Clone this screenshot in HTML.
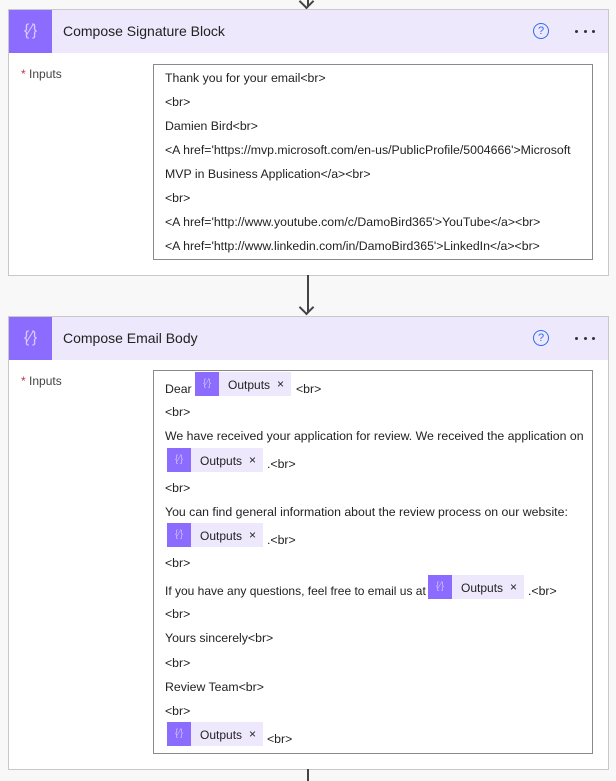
<!DOCTYPE html><html><head><style>
body{margin:0;width:616px;height:781px;background:#f8f8f8;position:relative;overflow:hidden;font-family:"Liberation Sans",sans-serif;font-size:12px;color:#222}
.a{position:absolute}
.card{position:absolute;left:8px;width:599px;background:#fff;border:1px solid #c8c8c8}
.hd{position:absolute;left:0;top:0;right:0;height:43px;background:#ede8fb}
.ic{position:absolute;left:0;top:0;width:43px;height:43px;background:#8c6cff;color:#d8ccff;font-size:16px;text-align:center;line-height:42px}
.tt{position:absolute;left:54px;top:13px;font-size:14px;color:#222}
.q{position:absolute;left:524px;top:13px;width:14px;height:14px;border:1.3px solid #2f6bf5;border-radius:50%;color:#2f6bf5;font-size:11px;text-align:center;line-height:14px}
.dots{position:absolute;left:566px;top:20px;width:20px;height:3px;display:flex;justify-content:space-between}
.dots i{width:3px;height:3px;border-radius:50%;background:#333}
.lab{position:absolute;left:12px;top:57px;color:#444}
.lab b{color:#c4314b;font-weight:normal}
.box{position:absolute;left:144px;background:#fff;border:1px solid #8a8a8a;width:438px}
.t{position:absolute;white-space:nowrap;font-size:12.3px}
.tok{position:absolute;height:24px;width:96px;background:#ede8fb}
.tok i{position:absolute;left:0;top:0;width:24px;height:24px;background:#8c6cff;color:#c8b8ff;font-style:normal;font-size:10px;text-align:center;line-height:24px}
.tok span{position:absolute;left:33px;top:6px}
.tok s{position:absolute;left:82px;top:5px;text-decoration:none;font-size:12px}
.line{position:absolute;left:307px;width:2px;background:#444}
</style></head><body>
<div class="line" style="top:0;height:6px"></div>
<div class="a" style="left:301px;top:-4px;width:9px;height:9px;border-right:2px solid #444;border-bottom:2px solid #444;transform:rotate(45deg)"></div>
<div class="card" style="top:9px;height:265px">
<div class="hd"><div class="ic">{⁄}</div><div class="tt">Compose Signature Block</div><div class="q">?</div><div class="dots"><i></i><i></i><i></i></div></div>
<div class="lab"><b>*</b> Inputs</div>
<div class="box" style="top:54px;height:194px"></div>
</div>
<div class="t" style="left:165px;top:71px">Thank you for your email&lt;br&gt;</div>
<div class="t" style="left:165px;top:95px">&lt;br&gt;</div>
<div class="t" style="left:165px;top:119px">Damien Bird&lt;br&gt;</div>
<div class="t" style="left:165px;top:143px">&lt;A href='https://mvp.microsoft.com/en-us/PublicProfile/5004666'&gt;Microsoft</div>
<div class="t" style="left:165px;top:167px">MVP in Business Application&lt;/a&gt;&lt;br&gt;</div>
<div class="t" style="left:165px;top:191px">&lt;br&gt;</div>
<div class="t" style="left:165px;top:215px">&lt;A href='http://www.youtube.com/c/DamoBird365'&gt;YouTube&lt;/a&gt;&lt;br&gt;</div>
<div class="t" style="left:165px;top:239px">&lt;A href='http://www.linkedin.com/in/DamoBird365'&gt;LinkedIn&lt;/a&gt;&lt;br&gt;</div>
<div class="line" style="top:275px;height:38px"></div>
<div class="a" style="left:301px;top:302px;width:9px;height:9px;border-right:2px solid #444;border-bottom:2px solid #444;transform:rotate(45deg)"></div>
<div class="card" style="top:316px;height:452px">
<div class="hd"><div class="ic">{⁄}</div><div class="tt">Compose Email Body</div><div class="q">?</div><div class="dots"><i></i><i></i><i></i></div></div>
<div class="lab"><b>*</b> Inputs</div>
<div class="box" style="top:53px;height:382px"></div>
</div>
<div class="t" style="left:165px;top:382px">Dear</div>
<div class="tok" style="left:195px;top:372px"><i>{⁄}</i><span>Outputs</span><s>×</s></div>
<div class="t" style="left:296px;top:382px">&lt;br&gt;</div>
<div class="t" style="left:165px;top:405px">&lt;br&gt;</div>
<div class="t" style="left:165px;top:429px">We have received your application for review. We received the application on</div>
<div class="tok" style="left:167px;top:448px"><i>{⁄}</i><span>Outputs</span><s>×</s></div>
<div class="t" style="left:267px;top:457px">.&lt;br&gt;</div>
<div class="t" style="left:165px;top:481px">&lt;br&gt;</div>
<div class="t" style="left:165px;top:505px">You can find general information about the review process on our website:</div>
<div class="tok" style="left:167px;top:523px"><i>{⁄}</i><span>Outputs</span><s>×</s></div>
<div class="t" style="left:267px;top:533px">.&lt;br&gt;</div>
<div class="t" style="left:165px;top:556px">&lt;br&gt;</div>
<div class="t" style="left:165px;top:584px;font-size:12px">If you have any questions, feel free to email us at</div>
<div class="tok" style="left:428px;top:575px"><i>{⁄}</i><span>Outputs</span><s>×</s></div>
<div class="t" style="left:528px;top:584px">.&lt;br&gt;</div>
<div class="t" style="left:165px;top:607px">&lt;br&gt;</div>
<div class="t" style="left:165px;top:631px">Yours sincerely&lt;br&gt;</div>
<div class="t" style="left:165px;top:656px">&lt;br&gt;</div>
<div class="t" style="left:165px;top:680px">Review Team&lt;br&gt;</div>
<div class="t" style="left:165px;top:704px">&lt;br&gt;</div>
<div class="tok" style="left:167px;top:722px"><i>{⁄}</i><span>Outputs</span><s>×</s></div>
<div class="t" style="left:267px;top:732px">&lt;br&gt;</div>
<div class="line" style="top:769px;height:12px"></div>
</body></html>
